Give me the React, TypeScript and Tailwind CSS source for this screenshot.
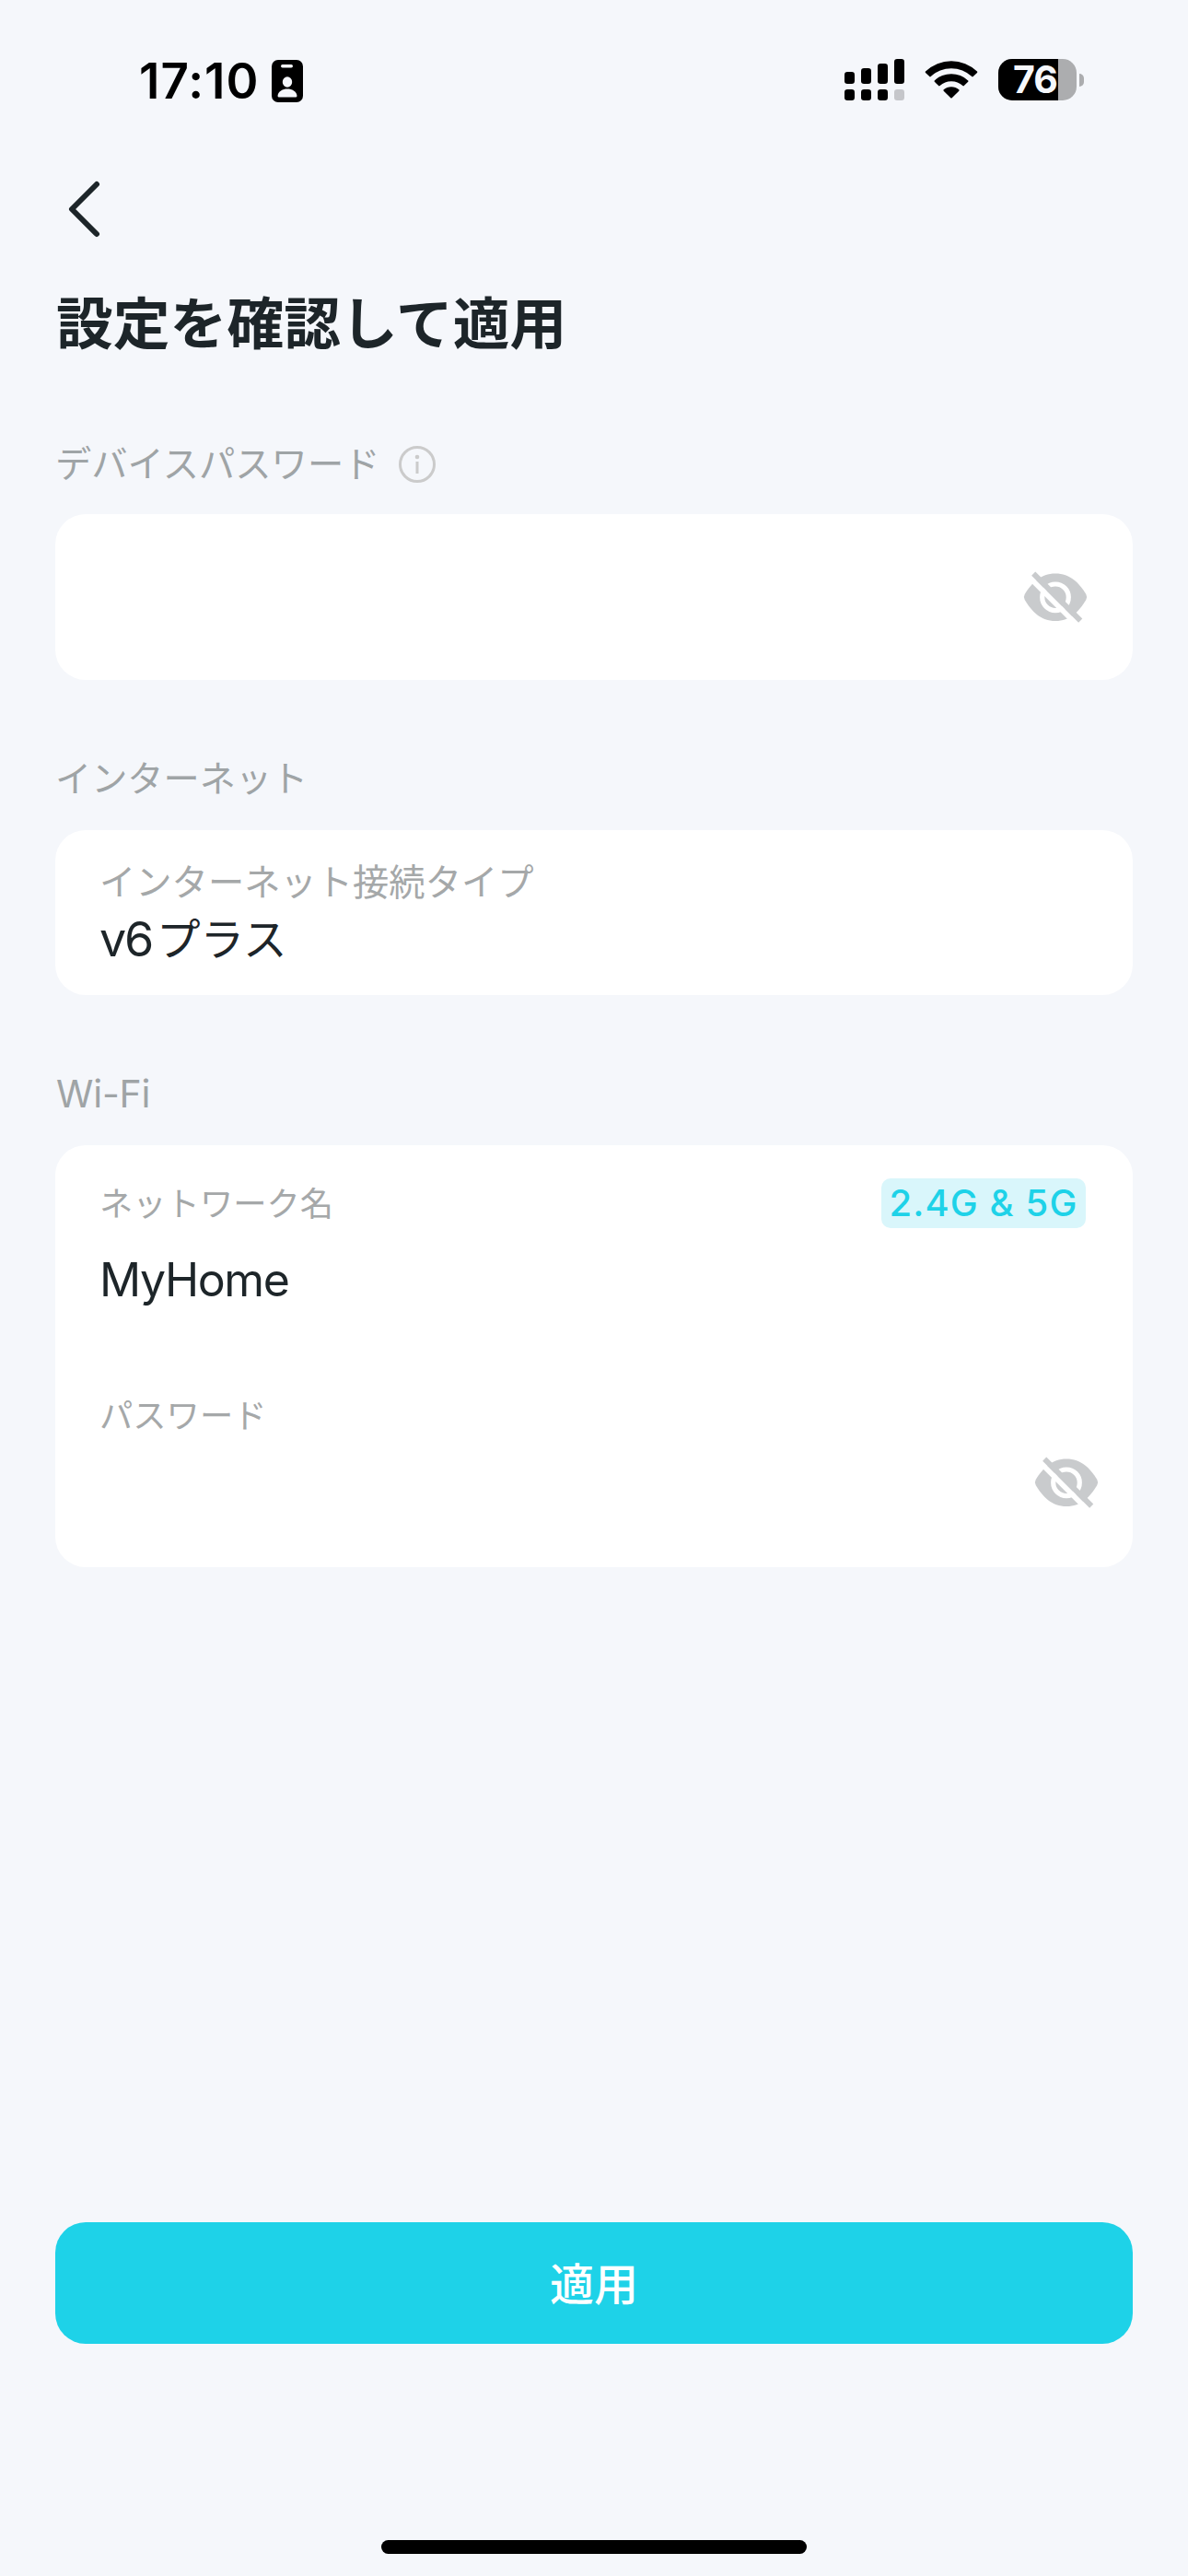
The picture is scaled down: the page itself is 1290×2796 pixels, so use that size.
import type { ReactNode } from 'react'

const batteryLevel = 76

function IdBadgeIcon() {
  return (
    <svg width="34" height="46" viewBox="0 0 34 46" className="shrink-0">
      <rect width="34" height="46" rx="7" fill="#000" />
      <rect x="10" y="5" width="13" height="3.4" rx="1.7" fill="#f5f7fb" />
      <ellipse cx="17" cy="24" rx="5.2" ry="5.8" fill="#f5f7fb" />
      <path d="M6.500 39C7 34 12 31.400 17 31.400S27 34 27.500 39Q27.500 40.500 26 40.500H8Q6.500 40.500 6.500 39Z" fill="#f5f7fb" />
    </svg>
  )
}

function SignalIcon() {
  return (
    <svg width="65" height="45" viewBox="0 0 65 45">
      <rect x="0" y="14" width="11" height="13" rx="3.2" />
      <rect x="18" y="10" width="11" height="17" rx="3.2" />
      <rect x="36" y="5" width="11" height="22" rx="3.2" />
      <rect x="54" y="0" width="11" height="27" rx="3.2" />
      <rect x="0" y="33" width="11" height="12" rx="3.2" />
      <rect x="18" y="33" width="11" height="12" rx="3.2" />
      <rect x="36" y="33" width="11" height="12" rx="3.2" />
      <rect x="54" y="33" width="11" height="12" rx="3.2" fill="#c5c6ca" />
    </svg>
  )
}

function WifiIcon() {
  return (
    <svg width="58" height="43" viewBox="0 0 58 43">
      <path d="M1 12.600A40.500 40.500 0 0 1 57 12.600Q57.600 13.200 57 13.900L52.700 18.100Q52 18.800 51.300 18.100A32.200 32.200 0 0 0 6.700 18.100Q6 18.800 5.300 18.100L1 13.900Q.4 13.200 1 12.600Z" />
      <path d="M10.800 22.400A26.500 26.500 0 0 1 47.200 22.400Q47.900 23.100 47.200 23.800L42.800 28.100Q42.100 28.700 41.400 28.100A18.300 18.300 0 0 0 16.600 28.100Q15.900 28.700 15.200 28.100L10.800 23.800Q10.100 23.100 10.800 22.400Z" />
      <path d="M20.700 32.300A12.500 12.500 0 0 1 37.300 32.300Q38 33 37.300 33.700L29.700 41.200Q29 41.900 28.300 41.200L20.700 33.700Q20 33 20.700 32.300Z" />
    </svg>
  )
}

function Battery() {
  return (
    <div className="flex items-center gap-[3px]">
      <div className="relative flex h-[45px] w-[85px] items-center pl-[16px]">
        <div className="absolute inset-0 overflow-hidden rounded-[15px] bg-[#acadaf]">
          <div className="h-full bg-black" style={{ width: `${batteryLevel}%` }} />
        </div>
        <span className="relative text-[41px] leading-[49px] font-bold tracking-[-1px] text-[#f5f7fb]">{batteryLevel}</span>
      </div>
      <div className="h-[14px] w-[5px] rounded-r-full bg-[#acadaf]" />
    </div>
  )
}

function HiddenEyeIcon() {
  return (
    <svg width="70" height="56" viewBox="0 0 70 56" className="shrink-0">
      <path d="M35 2.500C51 2.500 61 13 68.300 25Q70 28 68.300 31C61 43.500 51 54 35 54S9 43.500 1.700 31Q0 28 1.700 25C9 13 19 2.500 35 2.500Z" fill="#c9cbcd" />
      <circle cx="35" cy="28.300" r="14.300" fill="none" stroke="#fff" strokeWidth="5.200" />
      <path d="M7.500 7.200L56.500 56.200" stroke="#fff" strokeWidth="5.800" />
      <path d="M11.200 2.600L62.200 53.600" stroke="#c9cbcd" strokeWidth="5.800" />
    </svg>
  )
}

function InfoIcon() {
  return (
    <svg width="40" height="40" viewBox="0 0 40 40" fill="none">
      <circle cx="20" cy="20" r="18.500" stroke="#cbcbcb" strokeWidth="3" />
      <circle cx="20" cy="12" r="2.300" fill="#cbcbcb" />
      <path d="M20 17V30" stroke="#cbcbcb" strokeWidth="3" />
    </svg>
  )
}

function StatusBar() {
  return (
    <header className="flex h-[174px] items-start justify-between pr-[113px] pl-[151px]">
      <div className="flex items-start pt-[57px]">
        <span className="w-[144px] text-[53px] leading-[62px] font-semibold tracking-[1px] text-black">17:10</span>
        <div className="pt-[8px]">
          <IdBadgeIcon />
        </div>
      </div>
      <div className="flex items-center gap-[22px] pt-[64px]">
        <SignalIcon />
        <WifiIcon />
        <Battery />
      </div>
    </header>
  )
}

function Section({ label, icon, children }: { label: ReactNode; icon?: ReactNode; children: ReactNode }) {
  return (
    <section>
      <div className="mb-[26px] flex h-[60px] items-center gap-[20px]">
        <h2 className="text-[39.200px] leading-[60px] text-[#9fa4a6]">{label}</h2>
        {icon}
      </div>
      {children}
    </section>
  )
}

export default function App() {
  return (
    <main className="flex h-[2796px] w-[1290px] flex-col bg-[#f5f7fb] font-[Inter,'Noto_Sans_CJK_JP',sans-serif] text-[#1d2529]">
      <StatusBar />
      <button aria-label="戻る" className="ml-[72px] flex h-[106px] w-[60px] items-center">
        <svg width="40" height="64" viewBox="0 0 40 64" fill="none">
          <path d="M33 5L6 32L33 59" stroke="#1d2529" strokeWidth="6" strokeLinecap="round" strokeLinejoin="round" />
        </svg>
      </button>
      <h1 className="mt-[27px] ml-[61px] text-[61.800px] leading-[90px] font-bold">設定を確認して適用</h1>

      <div className="mx-[60px] mt-[77px] flex flex-col gap-[77px]">
        <section>
          <div className="mb-[24px] flex h-[60px] items-center gap-[20px]">
            <h2 className="text-[39.300px] leading-[60px] text-[#9fa4a6]">デバイスパスワード</h2>
            <InfoIcon />
          </div>
          <div className="flex h-[180px] items-center justify-end rounded-[33px] bg-white pr-[49px]">
            <HiddenEyeIcon />
          </div>
        </section>

        <Section label="インターネット">
          <div className="h-[179px] rounded-[33px] bg-white px-[48px] pt-[30px]">
            <p className="text-[39.300px] leading-[54px] text-[#a5a8a9]">インターネット接続タイプ</p>
            <p className="flex gap-[5px] leading-[70px]">
              <span className="text-[52px] tracking-[-2.300px]">v6</span>
              <span className="text-[47.600px]">プラス</span>
            </p>
          </div>
        </Section>

        <Section label={<span className="pl-px text-[41px] tracking-[-0.200px]">Wi-Fi</span>}>
          <div className="h-[458px] rounded-[33px] bg-white pt-[36px] pl-[48px]">
            <div className="flex h-[54px] items-center justify-between pr-[51px]">
              <p className="pt-[2px] text-[36.300px] leading-[54px] text-[#a5a8a9]">ネットワーク名</p>
              <span className="flex h-[54px] w-[222px] items-center justify-center rounded-[10px] bg-[#d9f6fb] text-[40px] font-medium tracking-[1.100px] text-[#1ed2e8]">2.4G &amp; 5G</span>
            </div>
            <p className="mt-[22px] text-[50px] leading-[68px] tracking-[-1.400px]">MyHome</p>
            <p className="mt-[87px] text-[36.300px] leading-[54px] text-[#a5a8a9]">パスワード</p>
            <div className="mt-[17px] flex justify-end pr-[37px]">
              <HiddenEyeIcon />
            </div>
          </div>
        </Section>
      </div>

      <button className="mx-[60px] mt-auto flex h-[132px] shrink-0 items-center justify-center rounded-[33px] bg-[#1ed2e8] pt-[3px] text-[48px] font-medium text-white">
        適用
      </button>
      <div className="mx-auto mt-[213px] mb-[24px] h-[15px] w-[462px] shrink-0 rounded-full bg-black" />
    </main>
  )
}
